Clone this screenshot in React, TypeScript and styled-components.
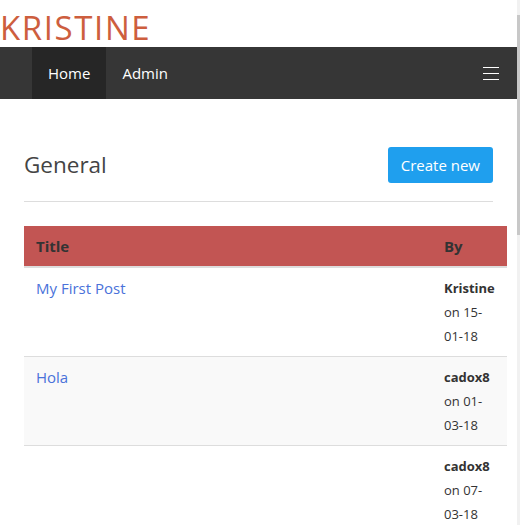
import React from "react";
import styled, { createGlobalStyle } from "styled-components";

const GlobalStyle = createGlobalStyle`
  body {
    margin: 0;
    font-family: "Segoe UI", "Open Sans", sans-serif;
    font-size: 13px;
    line-height: 24px;
    color: #333;
    background: #fff;
  }
`;

const Shell = styled.div`
  display: flex;
  align-items: flex-start;
`;

const Page = styled.div`
  flex: 1;
  min-width: 0;
`;

const ScrollTrack = styled.div`
  position: sticky;
  top: 0;
  flex: 0 0 3px;
  height: 100vh;
  display: flex;
  flex-direction: column;
  padding: 15px 0 290px;
  box-sizing: border-box;
  background: #f1f1f1;
`;

const ScrollThumb = styled.div`
  flex: 1;
  background: #c8c8c8;
`;

const Brand = styled.h1`
  margin: 0;
  height: 47px;
  line-height: 56px;
  font-size: 33px;
  font-weight: 400;
  letter-spacing: 1.6px;
  color: #cd5e3e;
`;

const Navbar = styled.nav`
  display: flex;
  align-items: stretch;
  height: 52px;
  padding: 0 18px 0 32px;
  background: #363636;
`;

const NavItem = styled.a<{ $active?: boolean }>`
  display: flex;
  align-items: center;
  padding: 0 16px;
  font-size: 15px;
  color: #fff;
  text-decoration: none;
  background: ${({ $active }) => ($active ? "#262626" : "transparent")};
`;

const Toggle = styled.button`
  margin-left: auto;
  align-self: center;
  display: flex;
  flex-direction: column;
  gap: 5px;
  width: 16px;
  padding: 0;
  border: 0;
  background: none;

  span {
    display: block;
    height: 1px;
    background: #fff;
  }
`;

const Main = styled.main`
  padding: 48px 24px 700px;
`;

const PageHeader = styled.div`
  display: flex;
  align-items: center;
  justify-content: space-between;
  padding-bottom: 18px;
  border-bottom: 1px solid #dddddd;
`;

const Heading = styled.h2`
  margin: 0;
  font-size: 22.5px;
  font-weight: 400;
  color: #444;
`;

const CreateButton = styled.button`
  height: 36px;
  padding: 0 13px;
  border: 0;
  border-radius: 3px;
  background: #1f9fee;
  color: #fff;
  font-family: inherit;
  font-size: 15px;
`;

const Table = styled.table`
  width: calc(100% + 14px);
  margin-top: 24px;
  border-collapse: collapse;
  table-layout: fixed;
`;

const HeadCell = styled.th<{ $narrow?: boolean }>`
  width: ${({ $narrow }) => ($narrow ? "55px" : "auto")};
  padding: 8px 8px 8px 12px;
  text-align: left;
  font-size: 15px;
  font-weight: 700;
  color: #333;
  background: #c25553;
  border-bottom: 2px solid #dddddd;
`;

const Row = styled.tr<{ $striped?: boolean }>`
  background: ${({ $striped }) => ($striped ? "#f9f9f9" : "#fff")};
`;

const Cell = styled.td`
  padding: 8px 8px 8px 12px;
  vertical-align: top;
  border-top: 1px solid #dddddd;
`;

const PostLink = styled.a`
  font-size: 15px;
  color: #4a72da;
  text-decoration: none;
`;

const Author = styled.strong`
  display: block;
  font-weight: 700;
`;

const posts = [
  { title: "My First Post", author: "Kristine", date: "15-01-18" },
  { title: "Hola", author: "cadox8", date: "01-03-18" },
  { title: "", author: "cadox8", date: "07-03-18" },
];

export default function App() {
  return (
    <Shell>
      <GlobalStyle />
      <Page>
        <Brand>KRISTINE</Brand>
        <Navbar>
          <NavItem $active href="#">Home</NavItem>
          <NavItem href="#">Admin</NavItem>
          <Toggle aria-label="menu">
            <span />
            <span />
            <span />
          </Toggle>
        </Navbar>
        <Main>
          <PageHeader>
            <Heading>General</Heading>
            <CreateButton>Create new</CreateButton>
          </PageHeader>
          <Table>
            <thead>
              <tr>
                <HeadCell>Title</HeadCell>
                <HeadCell $narrow>By</HeadCell>
              </tr>
            </thead>
            <tbody>
              {posts.map((p, i) => (
                <Row key={i} $striped={i % 2 === 1}>
                  <Cell>
                    <PostLink href="#">{p.title}</PostLink>
                  </Cell>
                  <Cell>
                    <Author>{p.author}</Author>
                    on {p.date}
                  </Cell>
                </Row>
              ))}
            </tbody>
          </Table>
        </Main>
      </Page>
      <ScrollTrack>
        <ScrollThumb />
      </ScrollTrack>
    </Shell>
  );
}
